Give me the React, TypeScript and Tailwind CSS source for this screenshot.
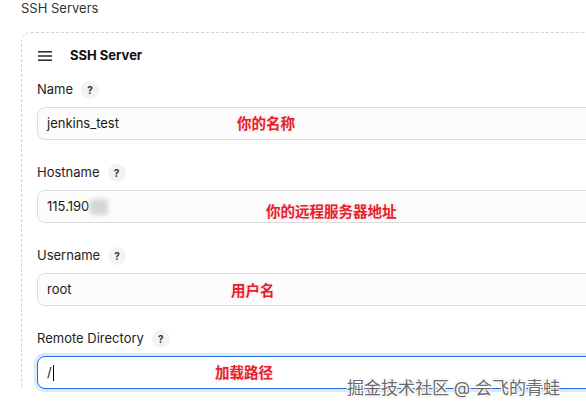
const fields = [
  { label: "Name", value: "jenkins_test", note: "你的名称", noteLeft: "left-[199px]", noteTop: "top-[5px]" },
  { label: "Hostname", value: "115.190", blur: true, note: "你的远程服务器地址", noteLeft: "left-[228px]", noteTop: "top-[10px]" },
  { label: "Username", value: "root", note: "用户名", noteLeft: "left-[193px]", noteTop: "top-[6px]" },
  { label: "Remote Directory", value: "/", focused: true, note: "加载路径", noteLeft: "left-[177px]", noteTop: "top-[5px]" },
];

function HelpBadge() {
  return (
    <span className="ml-2 flex h-[18px] w-[18px] items-center justify-center rounded-full bg-[#f2f3f5] text-[10px] font-bold text-[#333]">
      ?
    </span>
  );
}

export default function App() {
  return (
    <div className="relative h-[409px] w-[586px] overflow-hidden bg-white font-['Inter','Noto_Sans_CJK_SC',sans-serif] text-[#1a1a1a]">
      <div className="pl-[21px] pt-[0px] text-[13px] leading-[17px] text-[#333]">SSH Servers</div>

      <div className="ml-[21px] mt-[15px] w-[600px] rounded-tl-[10px] border-l border-t border-dashed border-[#d4d4d8] pl-[15px] pt-[14px]">
        <div className="flex h-[18px] items-center">
          <svg width="14" height="12" viewBox="0 0 14 12" className="ml-[1px]">
            <rect x="0" y="1" width="14" height="1.6" fill="#333" />
            <rect x="0" y="5.2" width="14" height="1.6" fill="#333" />
            <rect x="0" y="9.4" width="14" height="1.6" fill="#333" />
          </svg>
          <span className="ml-[18px] text-[13px] font-bold text-[#111]">SSH Server</span>
        </div>

        <div className="mt-[15px]">
          {fields.map((f) => (
            <div key={f.label} className="mb-[23px]">
              <div className="flex h-[20px] items-center text-[13px] text-[#222]">
                <span>{f.label}</span>
                <HelpBadge />
              </div>
              <div
                className={
                  f.focused
                    ? "relative mt-[7px] flex h-[33px] items-center rounded-[8px] border border-[#1e6fd9] bg-white pl-[9px] text-[13px] shadow-[0_0_0_3px_#dbe9fb]"
                    : "relative mt-[7px] flex h-[33px] items-center rounded-[8px] border border-[#dcdcdc] bg-[#fcfcfc] pl-[9px] text-[13px]"
                }
              >
                <span>{f.value}</span>
                {f.blur && <span className="ml-[1px] h-[16px] w-[18px] rounded-[4px] bg-[#d6d6d6] blur-[2px]" />}
                {f.focused && <span className="ml-[1px] h-[16px] w-px bg-black" />}
                <span
                  className={`absolute ${f.noteLeft} ${f.noteTop} text-[14.5px] font-bold text-[#e3202e] [text-shadow:0_0_2px_#fff,0_0_3px_#fbb]`}
                >
                  {f.note}
                </span>
              </div>
            </div>
          ))}
        </div>
      </div>

      <div className="absolute left-[347px] top-[376px] text-[17px] text-[#6b6b6b] [text-shadow:1px_1px_0_#fff,-1px_-1px_0_#fff,1px_-1px_0_#fff,-1px_1px_0_#fff,0_0_3px_#999]">
        掘金技术社区 @ 会飞的青蛙
      </div>
    </div>
  );
}
